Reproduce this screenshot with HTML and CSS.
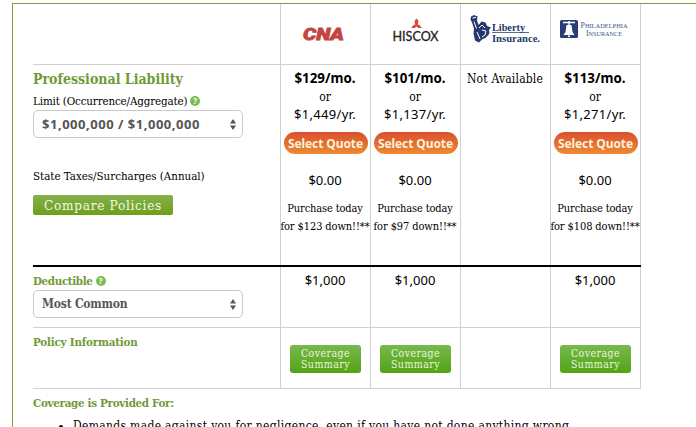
FILE: index.html
```html
<!DOCTYPE html>
<html lang="en">
<head>
<meta charset="utf-8">
<title>Compare Quotes</title>
<link rel="stylesheet" href="styles.css">
</head>
<body>
<main class="panel">
  <div class="row head">
    <div class="label"></div>
    <div class="logo">
      <svg width="89" height="60" viewBox="0 0 89 60"><text class="cna" x="22" y="36" textLength="41" lengthAdjust="spacingAndGlyphs">CNA</text></svg>
    </div>
    <div class="logo">
      <svg width="89" height="60" viewBox="0 0 89 60"><path d="M45.500 14.500l2 2.500-.7 3.500 1.700.500 2.500 3h-3.700l-1.800-1.500-1.800 1.500h-3.700l2.500-3 1.700-.500-.7-3.500z" fill="#df4638"/><text class="hiscox" x="21.500" y="36.500" textLength="46" lengthAdjust="spacingAndGlyphs">HISCOX</text></svg>
    </div>
    <div class="logo">
      <svg width="89" height="60" viewBox="0 0 89 60"><g fill="#27386f"><path d="M10 12.500l3-1.500 3.500 1.500-.5 4 1.500 4.500 3-3.500 4 1 1.500 3.500 4 1.500-2 2.500.5 3.500-3.500 4-4 2-3 3-4-2-1.500-7 .5-5-2-6-1.500-3z"/><path d="M11.500 14l3.500-.5M13 17.500l2.500 7M18 24l3-3 3 3M16 28l3 7M21 26l4 1-1 4-3 2" stroke="#fff" stroke-width="1" fill="none"/><text class="liberty" x="31" y="26.500" textLength="33" lengthAdjust="spacingAndGlyphs">Liberty</text><text class="liberty" x="31" y="37.500" textLength="48" lengthAdjust="spacingAndGlyphs">Insurance.</text><path d="M31 28h37v.700h-37z"/></g></svg>
    </div>
    <div class="logo">
      <svg width="89" height="60" viewBox="0 0 89 60"><rect x="9" y="16" width="18" height="18" rx="1.500" fill="#273d78"/><path d="M12 18.500h12M18 17v4" stroke="#fff" stroke-width="1.500"/><path d="M15.500 21h5l1 7 2 3h-11l2-3zM17 31.500h2v1.500h-2z" fill="#fff"/><g class="phil"><text x="29.500" y="23.500" textLength="47" lengthAdjust="spacingAndGlyphs"><tspan font-size="8">P</tspan>HILADELPHIA</text><text x="35" y="32" textLength="36" lengthAdjust="spacingAndGlyphs"><tspan font-size="8">I</tspan>NSURANCE</text></g></svg>
    </div>
  </div>

  <div class="row quote">
    <div class="label">
      <h1 class="title">Professional Liability</h1>
      <div class="limit"><span class="limit-text">Limit (Occurrence/Aggregate)</span><span class="help">?</span></div>
      <div class="select"><span class="select-num">$1,000,000 / $1,000,000</span><svg width="6" height="11" viewBox="0 0 6 11"><path d="M0 4.500L3 0l3 4.500zM0 6.500h6L3 11z" fill="#555"/></svg></div>
      <div class="taxes">State Taxes/Surcharges (Annual)</div>
      <button class="compare">Compare Policies</button>
    </div>
    <div class="cell"><b class="month">$129/mo.</b><span class="or">or</span><span class="year">$1,449/yr.</span><button class="pick">Select Quote</button><span class="tax">$0.00</span><span class="today">Purchase today</span><span class="down">for $123 down!!**</span></div>
    <div class="cell"><b class="month">$101/mo.</b><span class="or">or</span><span class="year">$1,137/yr.</span><button class="pick">Select Quote</button><span class="tax">$0.00</span><span class="today">Purchase today</span><span class="down">for $97 down!!**</span></div>
    <div class="cell"><span class="none">Not Available</span></div>
    <div class="cell"><b class="month">$113/mo.</b><span class="or">or</span><span class="year">$1,271/yr.</span><button class="pick">Select Quote</button><span class="tax">$0.00</span><span class="today">Purchase today</span><span class="down">for $108 down!!**</span></div>
  </div>

  <div class="row deduct">
    <div class="label">
      <div class="sub"><span>Deductible</span><span class="help">?</span></div>
      <div class="select"><span class="select-word">Most Common</span><svg width="6" height="11" viewBox="0 0 6 11"><path d="M0 4.500L3 0l3 4.500zM0 6.500h6L3 11z" fill="#555"/></svg></div>
    </div>
    <div class="cell"><span class="amount">$1,000</span></div>
    <div class="cell"><span class="amount">$1,000</span></div>
    <div class="cell"></div>
    <div class="cell"><span class="amount">$1,000</span></div>
  </div>

  <div class="row info">
    <div class="label"><div class="sub">Policy Information</div></div>
    <div class="cell"><button class="summary"><span>Coverage</span><span>Summary</span></button></div>
    <div class="cell"><button class="summary"><span>Coverage</span><span>Summary</span></button></div>
    <div class="cell"></div>
    <div class="cell"><button class="summary"><span>Coverage</span><span>Summary</span></button></div>
  </div>

  <section class="covered">
    <div class="sub">Coverage is Provided For:</div>
    <ul><li>Demands made against you for negligence, even if you have not done anything wrong</li></ul>
  </section>
</main>
</body>
</html>
```
FILE: styles.css
```css
* { box-sizing: border-box; }
body {
  margin: 0;
  background: #fff;
  color: #000;
  font-family: "DejaVu Serif Condensed", "DejaVu Serif", serif;
  font-stretch: condensed;
}
button { border: 0; padding: 0; display: block; font-family: inherit; font-stretch: inherit; }
svg { display: block; }
.panel {
  margin: 3px 0 0 12px;
  height: 424px;
  overflow: hidden;
  padding-left: 20px;
  border-top: 1px solid #79a03d;
  border-left: 1px solid #79a03d;
}
.row {
  display: grid;
  grid-template-columns: 247px 90px 90px 90px 91px;
  width: 608px;
  border-bottom: 1px solid #d0d0d0;
}
.head { height: 61px; }
.quote { height: 202px; border-bottom: 2px solid #000; }
.deduct { height: 61px; }
.info { height: 61px; }
.cell, .logo { border-left: 1px solid #d0d0d0; min-width: 0; }
.cell {
  display: flex;
  flex-direction: column;
  align-items: center;
  padding-right: 1px;
  white-space: nowrap;
}
.cell:last-child, .logo:last-child { border-right: 1px solid #d0d0d0; }
.label { white-space: nowrap; }

.cna { font: italic 900 16px Roboto, sans-serif; fill: #c34440; stroke: #c34440; stroke-width: .8px; }
.hiscox { font: 13px Lato, sans-serif; fill: #222; stroke: #222; stroke-width: .3px; }
.liberty { font: bold 10.5px "Liberation Serif", serif; }
.phil { font: 6.5px "Liberation Serif", serif; fill: #405688; }

.title { margin: 4px 0 0; font-size: 14px; line-height: 20px; color: #6f9a37; }
.limit { display: flex; align-items: center; height: 20px; margin-top: 2px; font-size: 11.5px; letter-spacing: -.15px; }
.help {
  width: 10px; height: 10px; margin-left: 3px; border-radius: 50%;
  background: #7cbb52; color: #fff; letter-spacing: 0;
  font: bold 8px/10px "Open Sans", sans-serif; text-align: center;
}
.select {
  display: flex; align-items: center; justify-content: space-between;
  width: 210px; height: 28px; padding: 0 6px 0 8px;
  border: 1px solid #c8c8cc; border-radius: 5px;
  color: #555; font-size: 12.5px; font-weight: bold;
}
.limit + .select { margin-top: -1px; }
.select-num { font-family: "Noto Sans", sans-serif; font-stretch: normal; font-size: 13px; letter-spacing: .52px; margin-top: -1px; }
.select-word { font-size: 12px; letter-spacing: -.2px; }
.taxes { margin-top: 28px; height: 20px; font-size: 11.5px; line-height: 20px; letter-spacing: -.03px; }
.compare {
  margin-top: 9px; width: 140px; height: 20px; border-radius: 2px;
  background: linear-gradient(#87b14a, #6c9f1d); color: #f4f8ea;
  font-size: 13.5px; line-height: 20px; letter-spacing: .7px;
}

.month, .year, .tax, .amount { font-family: "Noto Sans", sans-serif; font-stretch: normal; }
.month { margin-top: 3px; font-size: 13.3px; line-height: 20px; }
.or { margin-top: 1px; font-size: 12px; line-height: 16px; }
.year { font-size: 13px; line-height: 18px; letter-spacing: .3px; }
.pick {
  margin: 9px 0 0 1px; width: 84px; height: 22px; border-radius: 11px;
  background: linear-gradient(#d94f2d, #ee8a33); color: #fff1d8;
  font: bold 12px/23px "Noto Sans", sans-serif;
  letter-spacing: -.1px;
}
.tax { margin-top: 16px; font-size: 13px; line-height: 20px; }
.today { margin-top: 10px; font-size: 11px; line-height: 18px; letter-spacing: -.15px; }
.down { font-size: 11px; line-height: 18px; letter-spacing: -.1px; }
.none { margin-top: 4px; font-size: 12px; line-height: 20px; letter-spacing: .2px; }
.amount { margin-top: 3px; font-size: 13px; line-height: 20px; }

.sub { display: flex; align-items: center; height: 20px; color: #6f9a37; font-size: 11.5px; font-weight: bold; letter-spacing: -.2px; }
.deduct .sub { margin-top: 4px; letter-spacing: -.35px; }
.deduct .select { margin-top: -1px; }
.info .sub { margin-top: 4px; }
.summary {
  display: flex; flex-direction: column; align-items: center; justify-content: center;
  margin-top: 17px; width: 71px; height: 28px; padding-left: 1px; border-radius: 3px;
  background: linear-gradient(#78b94c, #52a315); color: #e9f5de;
  font-size: 10.5px; line-height: 11px; letter-spacing: .45px;
}
.covered .sub { margin-top: 4px; letter-spacing: -.3px; }
.covered ul { margin: 3px 0 0; padding-left: 40px; font-size: 12px; line-height: 20px; letter-spacing: .32px; white-space: nowrap; }
```
